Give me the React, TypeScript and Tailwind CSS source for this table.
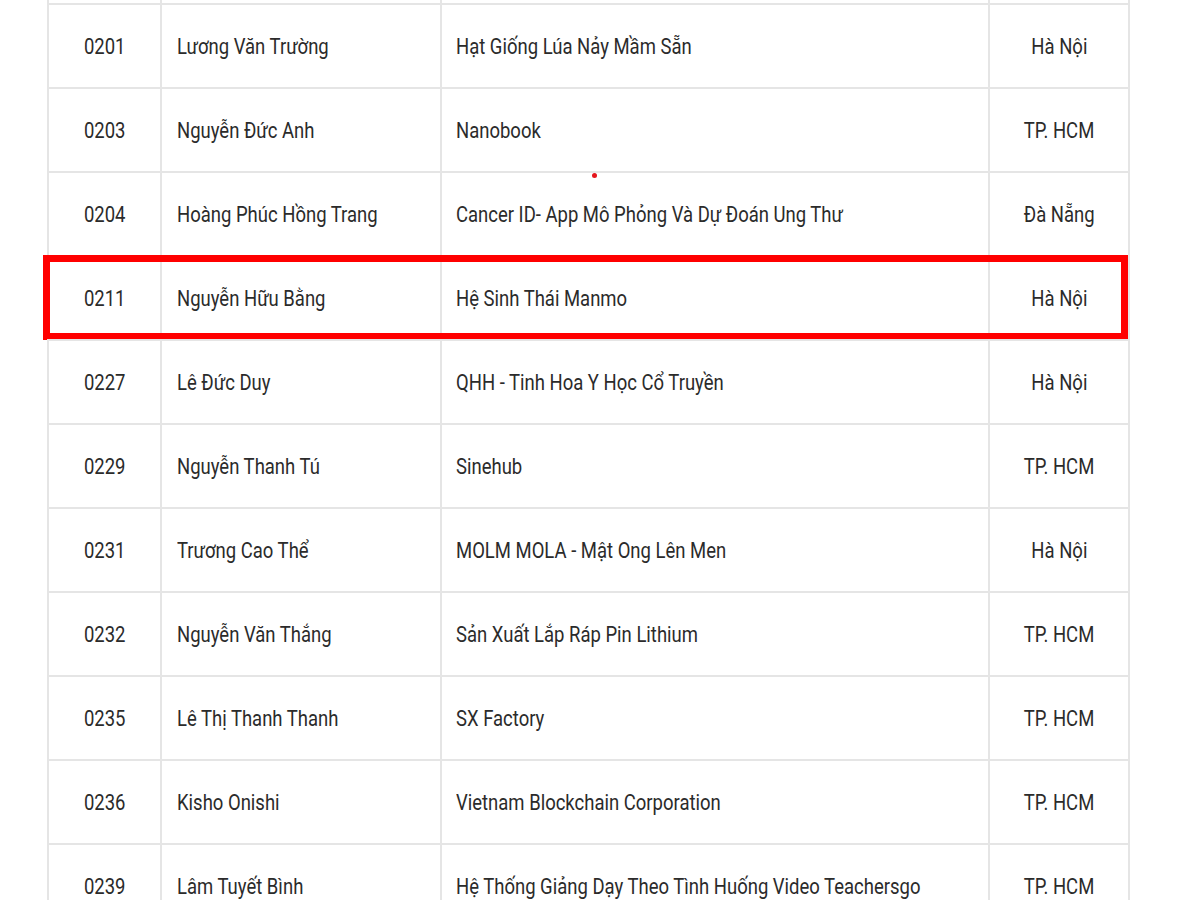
import React from 'react'

// ─── Data ─────────────────────────────────────────────────────────────────────

interface Row {
  code: string
  name: string
  project: string
  city: string
}

const ROWS: Row[] = [
  { code: '0201', name: 'Lương Văn Trường', project: 'Hạt Giống Lúa Nảy Mầm Sẵn', city: 'Hà Nội' },
  { code: '0203', name: 'Nguyễn Đức Anh', project: 'Nanobook', city: 'TP. HCM' },
  { code: '0204', name: 'Hoàng Phúc Hồng Trang', project: 'Cancer ID- App Mô Phỏng Và Dự Đoán Ung Thư', city: 'Đà Nẵng' },
  { code: '0211', name: 'Nguyễn Hữu Bằng', project: 'Hệ Sinh Thái Manmo', city: 'Hà Nội' },
  { code: '0227', name: 'Lê Đức Duy', project: 'QHH - Tinh Hoa Y Học Cổ Truyền', city: 'Hà Nội' },
  { code: '0229', name: 'Nguyễn Thanh Tú', project: 'Sinehub', city: 'TP. HCM' },
  { code: '0231', name: 'Trương Cao Thể', project: 'MOLM MOLA - Mật Ong Lên Men', city: 'Hà Nội' },
  { code: '0232', name: 'Nguyễn Văn Thắng', project: 'Sản Xuất Lắp Ráp Pin Lithium', city: 'TP. HCM' },
  { code: '0235', name: 'Lê Thị Thanh Thanh', project: 'SX Factory', city: 'TP. HCM' },
  { code: '0236', name: 'Kisho Onishi', project: 'Vietnam Blockchain Corporation', city: 'TP. HCM' },
  { code: '0239', name: 'Lâm Tuyết Bình', project: 'Hệ Thống Giảng Dạy Theo Tình Huống Video Teachersgo', city: 'TP. HCM' },
]

const HIGHLIGHT = '0211'

// ─── Cells ────────────────────────────────────────────────────────────────────

function Text({ children, left }: { children: React.ReactNode; left?: boolean }) {
  return (
    <span
      className={
        left
          ? 'inline-block whitespace-nowrap scale-x-[0.84] origin-left'
          : 'inline-block whitespace-nowrap scale-x-[0.84] origin-center'
      }
    >
      {children}
    </span>
  )
}

function TableRow({ row }: { row: Row }) {
  return (
    <div className="relative flex h-[84px] border-t-2 border-[#e5e5e5]">
      <div className="w-[113px] shrink-0 border-l-2 border-[#e5e5e5] flex items-center justify-center">
        <Text>{row.code}</Text>
      </div>
      <div className="w-[280px] shrink-0 border-l-2 border-[#e5e5e5] flex items-center pl-[15px]">
        <Text left>{row.name}</Text>
      </div>
      <div className="w-[548px] shrink-0 border-l-2 border-[#e5e5e5] flex items-center pl-[14px]">
        <Text left>{row.project}</Text>
      </div>
      <div className="w-[140px] shrink-0 border-l-2 border-[#e5e5e5] flex items-center justify-center">
        <Text>{row.city}</Text>
      </div>

      {row.code === '0204' && (
        <span className="absolute left-[545px] top-[0px] w-[5px] h-[5px] rounded-full bg-[#e5151c]" />
      )}

      {row.code === HIGHLIGHT && (
        <div className="absolute -left-[4px] -top-[2px] -bottom-[1px] right-[0px] border-[7px] border-[#ff0000]" />
      )}
    </div>
  )
}

// ─── Page ─────────────────────────────────────────────────────────────────────

export default function App() {
  return (
    <div className="h-[900px] overflow-hidden bg-white font-['Roboto',sans-serif] text-[22px] text-[#2b2b2b]">
      <div className="ml-[47px] w-[1083px] border-r-2 border-[#e5e5e5]">
        {/* tail of the row above, cut off by the top edge */}
        <div className="flex h-[3px]">
          <div className="w-[113px] border-l-2 border-[#e5e5e5]" />
          <div className="w-[280px] border-l-2 border-[#e5e5e5]" />
          <div className="w-[548px] border-l-2 border-[#e5e5e5]" />
          <div className="w-[140px] border-l-2 border-[#e5e5e5]" />
        </div>
        {ROWS.map((row) => (
          <TableRow key={row.code} row={row} />
        ))}
      </div>
    </div>
  )
}
